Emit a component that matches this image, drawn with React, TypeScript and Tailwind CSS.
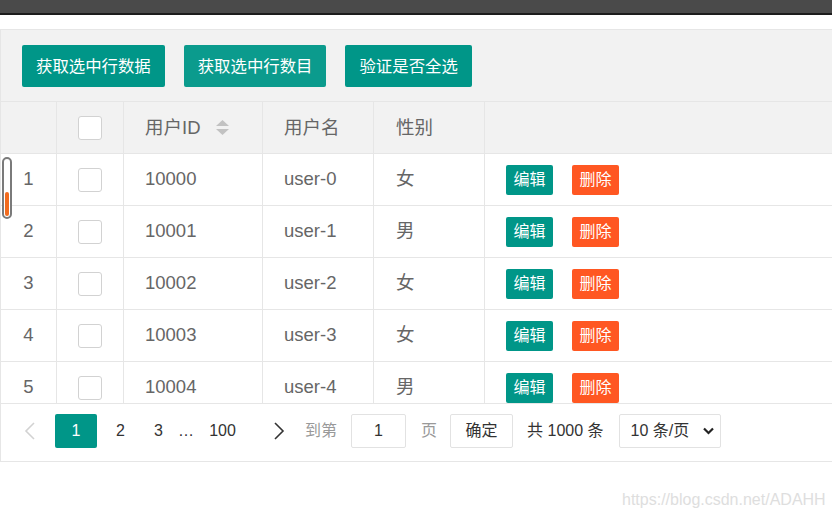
import React from 'react';

// 表格数据（可见的几行）
const rows = [
  { id: 10000, name: 'user-0', sex: '女' },
  { id: 10001, name: 'user-1', sex: '男' },
  { id: 10002, name: 'user-2', sex: '女' },
  { id: 10003, name: 'user-3', sex: '女' },
  { id: 10004, name: 'user-4', sex: '男' },
];

const font = "font-['Liberation_Sans','Noto_Sans_CJK_SC',sans-serif]";

function Checkbox() {
  return <span className="block w-[24px] h-[24px] border border-[#d2d2d2] rounded-[3px] bg-white" />;
}

function SortIcon() {
  return (
    <svg width="13" height="15" viewBox="0 0 13 15" className="ml-[15px]">
      <path d="M6.5 0L13 6H0z" fill="#c2c2c2" />
      <path d="M0 9h13l-6.5 6z" fill="#c2c2c2" />
    </svg>
  );
}

function Chevron({ dir, color }: { dir: 'l' | 'r'; color: string }) {
  return (
    <svg width="11" height="18" viewBox="0 0 11 18" fill="none" stroke={color} strokeWidth="1.6">
      {dir === 'l' ? <path d="M10 1L2 9l8 8" /> : <path d="M1 1l8 8-8 8" />}
    </svg>
  );
}

export default function App() {
  return (
    <div className={`relative w-[832px] h-[517px] overflow-hidden bg-white ${font}`}>
      {/* barra oscura de arriba */}
      <div className="h-[13px] bg-[#4a4a4a]" />
      <div className="h-[2px] bg-[#1c1c1c]" />
      <div className="h-[14px]" />

      <div className="border-t border-l border-[#e6e6e6] w-[840px]">
        {/* toolbar */}
        <div className="h-[72px] bg-[#f2f2f2] border-b border-[#e6e6e6] flex items-start gap-[19px] pl-[21px] pt-[15px]">
          <button className="h-[42px] px-[14px] rounded-[2px] bg-[#009688] text-white text-[16.4px]">获取选中行数据</button>
          <button className="h-[42px] px-[14px] rounded-[2px] bg-[#0b9b8d] text-white text-[16.4px]">获取选中行数目</button>
          <button className="h-[42px] px-[14px] rounded-[2px] bg-[#009688] text-white text-[16.4px]">验证是否全选</button>
        </div>

        {/* header */}
        <div className="grid grid-cols-[56px_67px_139px_111px_111px_1fr] h-[52px] bg-[#f2f2f2] border-b border-[#e6e6e6] text-[#666] text-[18.5px]">
          <div className="border-r border-[#e6e6e6]" />
          <div className="border-r border-[#e6e6e6] flex items-center justify-center"><Checkbox /></div>
          <div className="border-r border-[#e6e6e6] flex items-center px-[21px]">用户ID<SortIcon /></div>
          <div className="border-r border-[#e6e6e6] flex items-center px-[21px]">用户名</div>
          <div className="border-r border-[#e6e6e6] flex items-center px-[22px]">性别</div>
          <div />
        </div>

        {/* body */}
        <div className="h-[249px] overflow-hidden">
          {rows.map((r, i) => (
            <div key={r.id} className="grid grid-cols-[56px_67px_139px_111px_111px_1fr] h-[52px] border-b border-[#e6e6e6] text-[#666] text-[18.5px]">
              <div className="border-r border-[#e6e6e6] flex items-center justify-center pb-[2px]">{i + 1}</div>
              <div className="border-r border-[#e6e6e6] flex items-center justify-center"><Checkbox /></div>
              <div className="border-r border-[#e6e6e6] flex items-center px-[21px] pb-[2px]">{r.id}</div>
              <div className="border-r border-[#e6e6e6] flex items-center px-[21px] pb-[2px]">{r.name}</div>
              <div className="border-r border-[#e6e6e6] flex items-center px-[22px] pb-[2px]">{r.sex}</div>
              <div className="flex items-center gap-[19px] px-[21px]">
                <span className="h-[30px] w-[47px] rounded-[2px] bg-[#009688] text-white text-[16px] flex items-center justify-center">编辑</span>
                <span className="h-[30px] w-[47px] rounded-[2px] bg-[#ff5722] text-white text-[16px] flex items-center justify-center">删除</span>
              </div>
            </div>
          ))}
        </div>

        {/* paginación */}
        <div className="h-[59px] border-t border-b border-[#e6e6e6] flex items-center pb-[3px] text-[16px] text-[#333]">
          <span className="ml-[13px] w-[30px] flex justify-center"><Chevron dir="l" color="#d2d2d2" /></span>
          <span className="ml-[11px] w-[42px] h-[34px] rounded-[2px] bg-[#009688] text-white flex items-center justify-center">1</span>
          <span className="ml-[3px] w-[41px] text-center">2</span>
          <span className="w-[35px] text-center">3</span>
          <span className="w-[20px] text-center">…</span>
          <span className="w-[53px] text-center">100</span>
          <span className="ml-[11px] w-[38px] flex justify-center"><Chevron dir="r" color="#333" /></span>
          <span className="ml-[7px] text-[#999]">到第</span>
          <span className="ml-[14px] w-[55px] h-[34px] border border-[#e2e2e2] rounded-[2px] flex items-center justify-center">1</span>
          <span className="ml-[15px] text-[#999]">页</span>
          <span className="ml-[13px] w-[63px] h-[34px] border border-[#e2e2e2] rounded-[2px] flex items-center justify-center">确定</span>
          <span className="ml-[14px]">共 1000 条</span>
          <span className="ml-[15px] w-[102px] h-[34px] border border-[#e2e2e2] rounded-[2px] flex items-center justify-between pl-[11px] pr-[6px]">
            10 条/页
            <svg width="11" height="8" viewBox="0 0 11 8" fill="none" stroke="#222" strokeWidth="2.2">
              <path d="M1 1.5l4.5 4.5L10 1.5" />
            </svg>
          </span>
        </div>
      </div>

      {/* indicador de scroll superpuesto */}
      <div className="absolute left-[2px] top-[157px] w-[10px] h-[62px] rounded-full border-2 border-[#7a7a7a] bg-white">
        <div className="absolute left-[1px] right-[1px] bottom-[1px] h-[24px] rounded-full bg-[#f26b1d]" />
      </div>

      {/* marca de agua */}
      <div className="absolute left-[622px] top-[488px] text-[16px] text-[#dedede] font-['Liberation_Sans',sans-serif]">
        https://blog.csdn.net/ADAHH
      </div>
    </div>
  );
}
